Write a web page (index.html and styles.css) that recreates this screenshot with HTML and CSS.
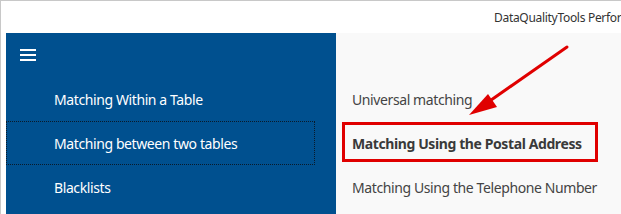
FILE: index.html
```html
<!DOCTYPE html>
<html>
<head>
<meta charset="utf-8">
<link rel="stylesheet" href="styles.css">
</head>
<body>
<div class="window">
  <div class="header"><span class="title">DataQualityTools Performance</span></div>
  <div class="main">
    <nav class="sidebar">
      <div class="menu-row">
        <span class="hamburger"><i></i><i></i><i></i></span>
      </div>
      <div class="nav-item">Matching Within a Table</div>
      <div class="nav-item focused">Matching between two tables</div>
      <div class="nav-item">Blacklists</div>
    </nav>
    <section class="content">
      <div class="spacer"></div>
      <div class="content-item">Universal matching</div>
      <div class="content-item strong">Matching Using the Postal Address</div>
      <div class="content-item">Matching Using the Telephone Number</div>
      <div class="highlight"></div>
      <svg class="arrow" width="285" height="181" viewBox="0 0 285 181">
        <line x1="231" y1="14" x2="148" y2="72" stroke="#e00000" stroke-width="3" stroke-linecap="round"/>
        <polygon points="133,82 152,61 161,74" fill="#e00000"/>
      </svg>
    </section>
  </div>
</div>
</body>
</html>
```
FILE: styles.css
```css
html, body {
  margin: 0;
  padding: 0;
  background: #ffffff;
}
body {
  font-family: "Noto Sans", "Open Sans", sans-serif;
}
.window {
  width: 621px;
  height: 214px;
  box-sizing: border-box;
  border-top: 1px solid #c8c8c8;
  border-left: 1px solid #c8c8c8;
  overflow: hidden;
  display: flex;
  flex-direction: column;
}
.header {
  height: 32px;
  flex: none;
  background: #ffffff;
  padding-left: 493px;
  white-space: nowrap;
  overflow: hidden;
}
.title {
  font-size: 12px;
  letter-spacing: -0.3px;
  line-height: 33px;
  color: #333333;
}
.main {
  flex: 1;
  display: flex;
  padding-left: 5px;
}
.sidebar {
  width: 330px;
  flex: none;
  background: #00508f;
  color: #ffffff;
}
.menu-row {
  height: 44px;
  display: flex;
  align-items: center;
  padding-left: 14px;
}
.hamburger {
  width: 16px;
  height: 12px;
  display: flex;
  flex-direction: column;
  justify-content: space-between;
}
.hamburger i {
  display: block;
  height: 2px;
  background: #ffffff;
}
.nav-item {
  width: 309px;
  height: 44px;
  box-sizing: border-box;
  padding-left: 48px;
  display: flex;
  align-items: center;
  font-size: 14px;
  letter-spacing: -0.4px;
}
.nav-item.focused {
  outline: 1px dotted #0a1a2a;
  outline-offset: -1px;
}
.content {
  flex: 1;
  background: #f9f9f9;
  position: relative;
}
.spacer {
  height: 44px;
}
.content-item {
  height: 44px;
  display: flex;
  align-items: center;
  padding-left: 16px;
  font-size: 14px;
  letter-spacing: -0.4px;
  color: #444444;
  white-space: nowrap;
}
.content-item.strong {
  font-weight: 700;
  color: #3a3a3a;
}
.highlight {
  position: absolute;
  left: 6px;
  top: 89px;
  width: 256px;
  height: 40px;
  box-sizing: border-box;
  border: 3px solid #e00000;
}
.arrow {
  position: absolute;
  left: 0;
  top: 0;
  pointer-events: none;
}
```
